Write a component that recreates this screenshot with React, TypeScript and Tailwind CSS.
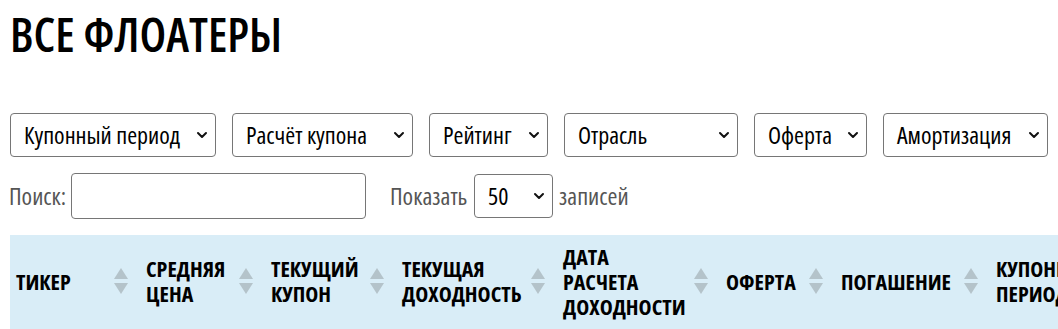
import React from 'react';

const filters = [
  { label: 'Купонный период', w: 'w-[206px]' },
  { label: 'Расчёт купона', w: 'w-[181px]' },
  { label: 'Рейтинг', w: 'w-[119px]' },
  { label: 'Отрасль', w: 'w-[174px]' },
  { label: 'Оферта', w: 'w-[113px]' },
  { label: 'Амортизация', w: 'w-[165px]' },
];

const columns = [
  { label: ['ТИКЕР'], w: 'w-[130px]' },
  { label: ['СРЕДНЯЯ', 'ЦЕНА'], w: 'w-[125px]' },
  { label: ['ТЕКУЩИЙ', 'КУПОН'], w: 'w-[131px]' },
  { label: ['ТЕКУЩАЯ', 'ДОХОДНОСТЬ'], w: 'w-[161px]' },
  { label: ['ДАТА', 'РАСЧЕТА', 'ДОХОДНОСТИ'], w: 'w-[163px]' },
  { label: ['ОФЕРТА'], w: 'w-[115px]' },
  { label: ['ПОГАШЕНИЕ'], w: 'w-[155px]' },
  { label: ['КУПОННЫЙ', 'ПЕРИОД'], w: 'w-[140px]' },
];

const Chevron = () => (
  <svg width="14" height="14" viewBox="0 0 14 14" className="flex-shrink-0">
    <path d="M3 5 L7 9 L11 5" fill="none" stroke="#111" strokeWidth="2" strokeLinecap="round" strokeLinejoin="round" />
  </svg>
);

const SortArrows = () => (
  <div className="flex flex-col items-center gap-[4px] flex-shrink-0">
    <svg width="14" height="11" viewBox="0 0 14 11">
      <path d="M7 0 L14 11 L0 11 Z" fill="#b4c3ca" />
    </svg>
    <svg width="14" height="11" viewBox="0 0 14 11">
      <path d="M0 0 L14 0 L7 11 Z" fill="#b4c3ca" />
    </svg>
  </div>
);

const Select = ({ label, w }: { label: string; w: string }) => (
  <div className={`${w} h-[44px] flex items-center justify-between border border-[#767676] rounded-[4px] pl-[13px] pr-[6px] text-[24px] leading-[30px] text-black bg-white`}>
    <span>{label}</span>
    <Chevron />
  </div>
);

export default function App() {
  return (
    <div className="w-[1058px] h-[329px] overflow-hidden bg-white font-['Open_Sans',sans-serif] font-stretch-condensed">
      <div className="pl-[10px] pt-[8px]">
        <h1 className="text-[47px] font-semibold leading-[52px] text-black">ВСЕ ФЛОАТЕРЫ</h1>

        <div className="flex gap-[16px] mt-[53px]">
          {filters.map((f) => (
            <Select key={f.label} label={f.label} w={f.w} />
          ))}
        </div>

        <div className="flex items-center mt-[16px] text-[24px] leading-[30px] text-[#555]">
          <span className="-ml-[1px] w-[62px]">Поиск:</span>
          <div className="w-[295px] h-[46px] border border-[#767676] rounded-[4px] bg-white" />
          <span className="ml-[24px] w-[84px]">Показать</span>
          <div className="w-[79px] h-[44px] flex items-center justify-between border border-[#767676] rounded-[4px] pl-[13px] pr-[6px] text-black">
            <span>50</span>
            <Chevron />
          </div>
          <span className="ml-[6px]">записей</span>
        </div>

        <div className="mt-[16px] bg-[#d9edf7] h-[100px] flex items-center pl-[6px] pb-[8px] whitespace-nowrap">
          {columns.map((c) => (
            <div key={c.label.join()} className={`${c.w} flex-shrink-0 flex items-center justify-between pr-[18px]`}>
              <div className="font-bold text-[22px] leading-[25px] text-black">
                {c.label.map((l) => (
                  <div key={l}>{l}</div>
                ))}
              </div>
              <SortArrows />
            </div>
          ))}
        </div>
      </div>
    </div>
  );
}
